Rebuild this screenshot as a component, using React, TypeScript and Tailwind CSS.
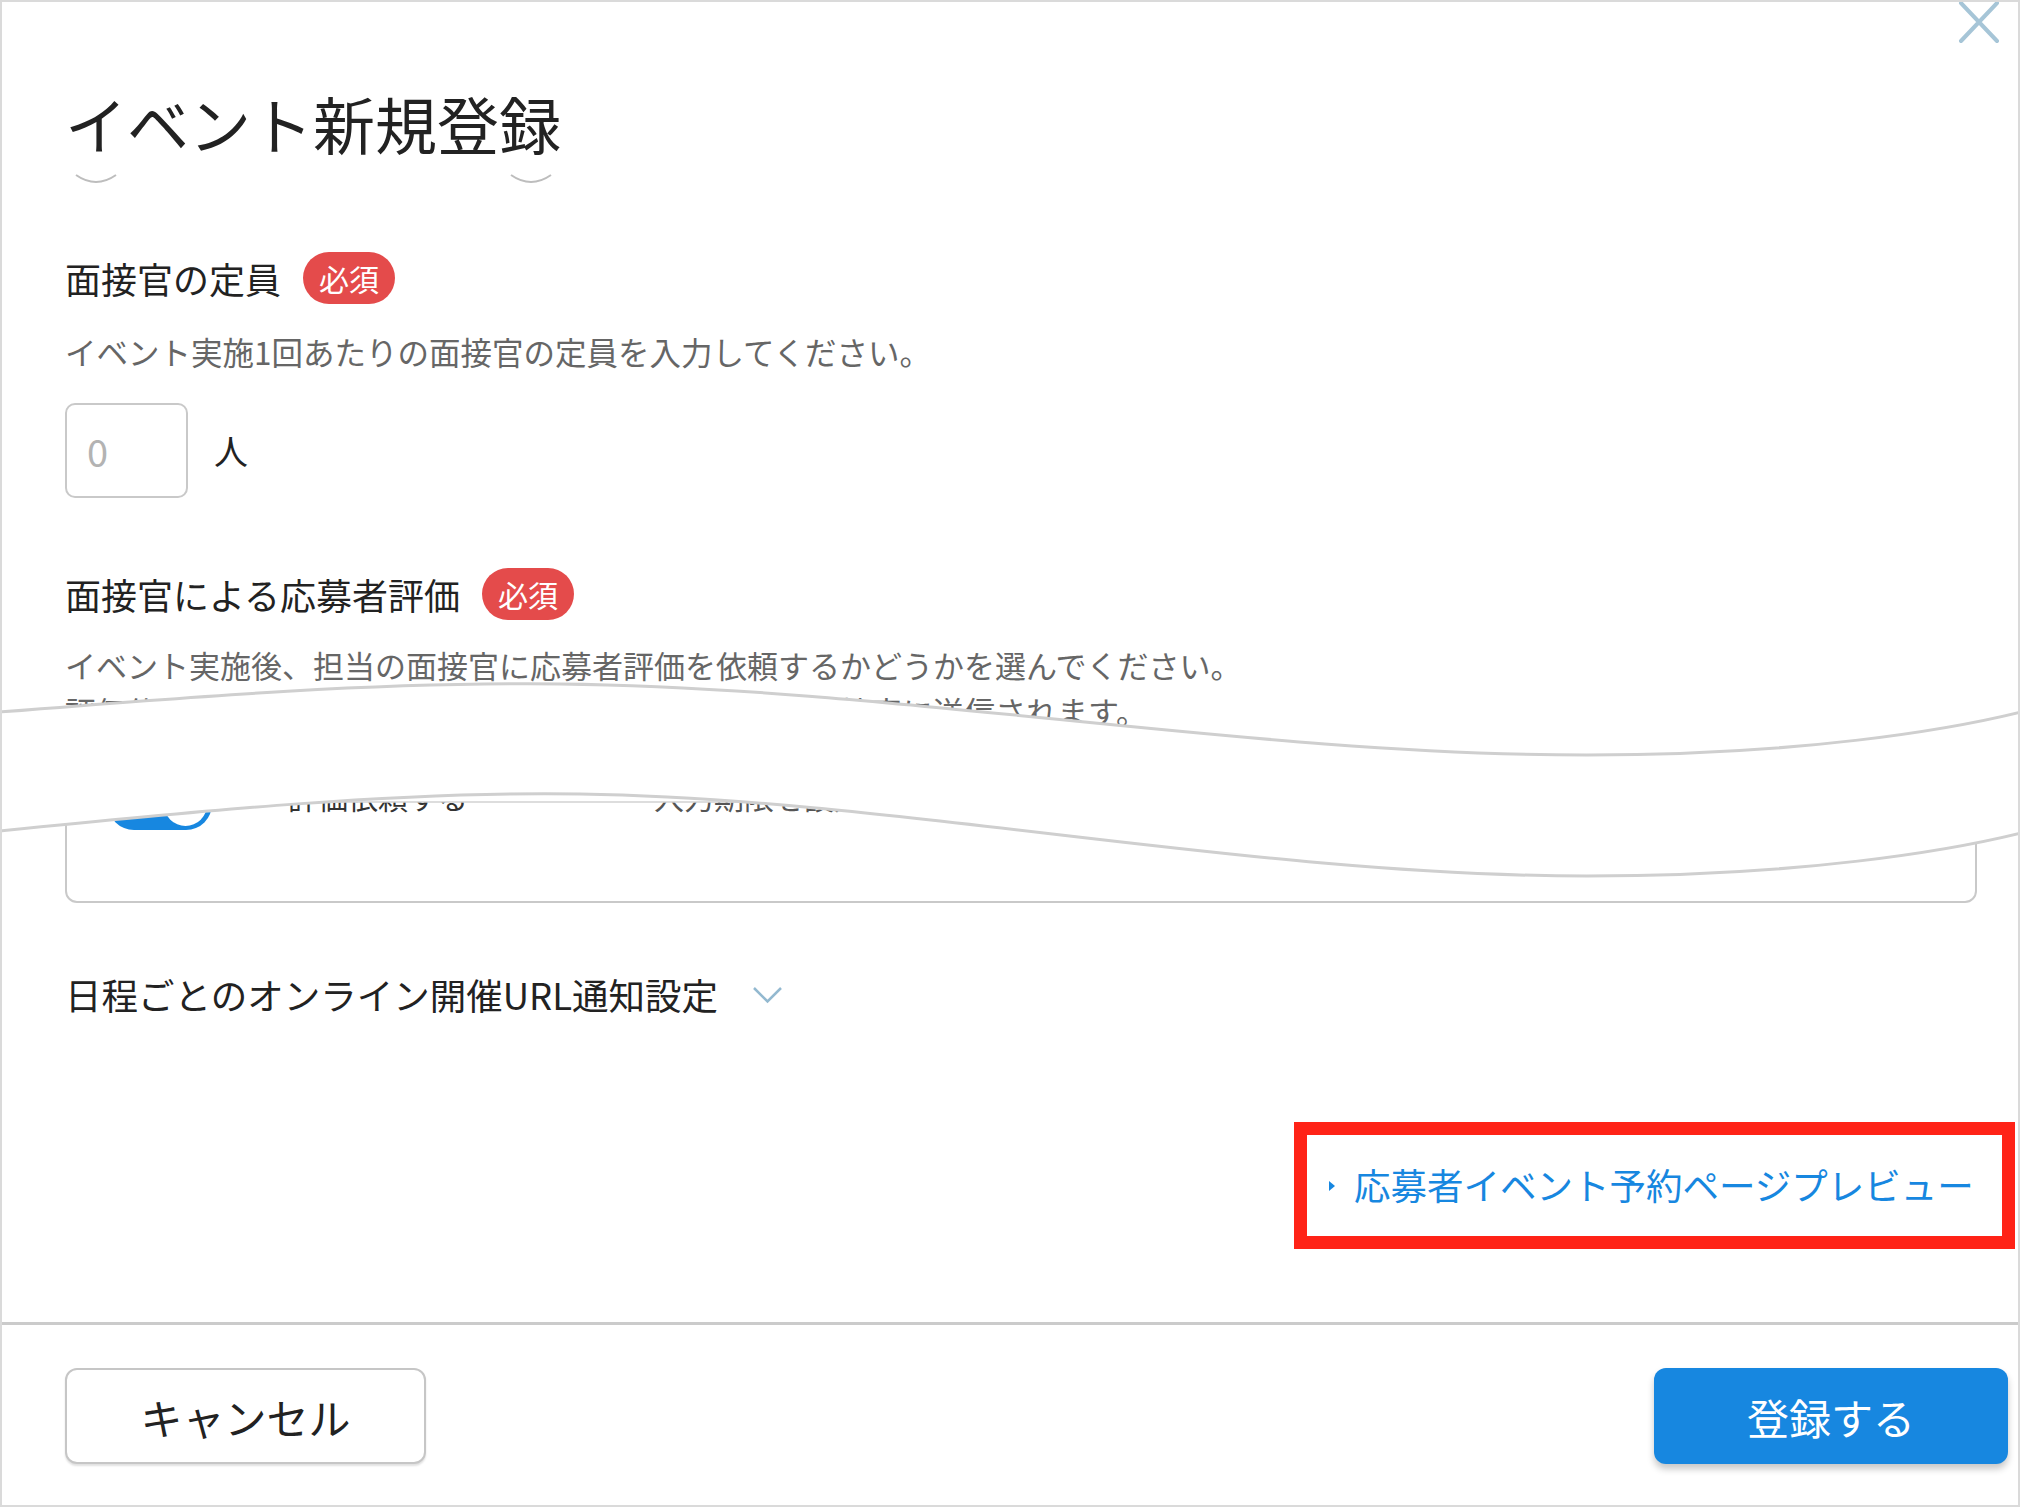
const jp = "font-['Noto_Sans_CJK_JP','Noto_Sans',sans-serif]";

function Badge() {
    return (
        <span className='ml-[22px] h-[52px] px-[16px] rounded-full bg-[#e44b4b] text-white text-[30px] leading-none flex items-center'>
            必須
        </span>
    )
}

function Arc({ className }: { className?: string }) {
    return (
        <svg className={className} width="42" height="14" viewBox="0 0 42 14" fill="none">
            <path d="M1 3 Q21 17 41 3" stroke="#bdbdbd" strokeWidth="2" />
        </svg>
    )
}

// torn-page wave drawn over the middle of the form
function TornBreak() {
    const top = "M0,712 C200,696 380,682 560,684 C900,688 1250,755 1587,755 C1800,755 1950,730 2025,711"
    const bottom = "M0,831 C200,811 400,791 580,794 C900,799 1250,876 1587,876 C1800,876 1950,851 2025,832"
    const band = top + " L2025,832 C1950,851 1800,876 1587,876 C1250,876 900,799 580,794 C400,791 200,811 0,831 Z"
    return (
        <svg className='absolute left-0 top-[638px]' width="2016" height="260" viewBox="2 640 2016 260" fill="none">
            <path d={top + " L2025,802 L0,802 Z"} fill="#ffffff" />
            <line x1="0" y1="802" x2="2025" y2="802" stroke="#d2d2d2" strokeWidth="1.5" />
            <path d={band} fill="#ffffff" />
            <path d={top} stroke="#cfcfcf" strokeWidth="3" />
            <path d={bottom} stroke="#cfcfcf" strokeWidth="3" />
        </svg>
    )
}

export default function App() {
    return (
        <div className={`relative w-[2020px] h-[1507px] border-2 border-[#dadada] bg-white overflow-hidden ${jp}`}>
            {/* close */}
            <svg className='absolute left-[1956px] top-0' width="42" height="42" viewBox="0 0 42 42" fill="none">
                <path d="M3 1 L39 39 M39 1 L3 39" stroke="#a6c5d7" strokeWidth="4" strokeLinecap="round" />
            </svg>

            <div className='pl-[63px] pr-[41px]'>
                <h1 className='mt-[90px] text-[62px] leading-[62px] text-[#222] font-normal'>イベント新規登録</h1>
                <div className='mt-[18px] h-[14px] flex'>
                    <Arc className='ml-[10px]' />
                    <Arc className='ml-[393px]' />
                </div>

                <div className='mt-[66px] h-[52px] flex items-center'>
                    <span className='text-[36px] leading-none text-[#222]'>面接官の定員</span>
                    <Badge />
                </div>
                <p className='mt-[24px] text-[31.5px] leading-[46px] text-[#666]'>イベント実施1回あたりの面接官の定員を入力してください。</p>
                <div className='mt-[29px] flex items-center'>
                    <div className='w-[123px] h-[95px] border-2 border-[#c9c9c9] rounded-[10px] flex items-center pl-[20px] text-[38px] text-[#b3b3b3]'>0</div>
                    <span className='ml-[26px] text-[34px] text-[#222]'>人</span>
                </div>

                <div className='mt-[70px] h-[52px] flex items-center'>
                    <span className='text-[36px] leading-none text-[#222]'>面接官による応募者評価</span>
                    <Badge />
                </div>
                <p className='mt-[22px] text-[31px] leading-[46px] text-[#666]'>
                    イベント実施後、担当の面接官に応募者評価を依頼するかどうかを選んでください。<br />
                    評価依頼のメールは、イベント実施日の翌日に担当の面接官に送信されます。
                </p>
                <div className='mt-[26px] h-[143px] border-2 border-[#c9c9c9] rounded-[12px] pt-[16px] pl-[41px]'>
                    <div className='flex items-center h-[52px]'>
                        <div className='w-[104px] h-[52px] rounded-full bg-[#1787e0] flex items-center justify-end pr-[5px]'>
                            <div className='w-[43px] h-[43px] rounded-full bg-white' />
                        </div>
                        <span className='ml-[76px] mb-[16px] text-[30px] text-[#333]'>評価依頼する</span>
                        <span className='ml-[186px] mb-[16px] text-[30px] text-[#555]'>入力期限を設定</span>
                    </div>
                </div>

                <div className='mt-[66px] h-[52px] flex items-center'>
                    <span className='text-[36.5px] leading-none text-[#222]'>日程ごとのオンライン開催URL通知設定</span>
                    <svg className='ml-[34px]' width="31" height="18" viewBox="0 0 31 18" fill="none">
                        <path d="M2 2 L15.5 15.5 L29 2" stroke="#93b9d0" strokeWidth="2.5" />
                    </svg>
                </div>
            </div>

            <div className='mt-[101px] flex justify-end pr-[3px]'>
                <div className='w-[721px] h-[127px] border-[13px] border-[#ff2317] flex items-center pl-[21px]'>
                    <svg width="8" height="12" viewBox="0 0 8 12">
                        <path d="M1 1 L7 6 L1 11 Z" fill="#1787e0" />
                    </svg>
                    <span className='ml-[18px] text-[36.5px] leading-none text-[#1787e0]'>応募者イベント予約ページプレビュー</span>
                </div>
            </div>

            <div className='mt-[73px] h-[3px] bg-[#cbcbcb]' />

            <div className='mt-[43px] flex justify-between pl-[63px] pr-[10px]'>
                <button className='w-[361px] h-[96px] border-2 border-[#c6c6c6] rounded-[12px] bg-white shadow-[0_2px_2px_rgba(0,0,0,0.12)] text-[42px] text-[#222]'>キャンセル</button>
                <button className='w-[354px] h-[96px] rounded-[12px] bg-[#1787e0] shadow-[0_5px_7px_rgba(0,0,0,0.22)] text-[42px] text-white'>登録する</button>
            </div>

            <TornBreak />
        </div>
    )
}
